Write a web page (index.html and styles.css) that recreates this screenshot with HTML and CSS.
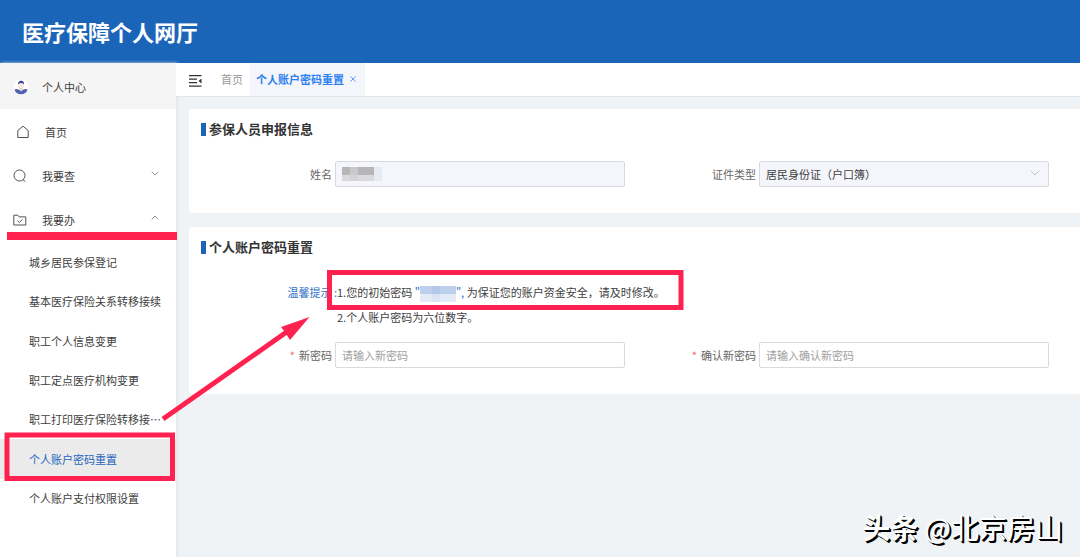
FILE: index.html
```html
<!DOCTYPE html>
<html lang="zh-CN">
<head>
<meta charset="utf-8">
<title>医疗保障个人网厅</title>
<link rel="stylesheet" href="styles.css">
</head>
<body>
<header class="header"><h1 class="brand">医疗保障个人网厅</h1></header>
<div class="layout">
  <nav class="sidebar" aria-label="主菜单">
    <a class="profile" href="#">
      <svg class="avatar" width="16" height="16" viewBox="0 0 16 16" aria-hidden="true">
        <circle cx="8" cy="8" r="7.5" fill="#fff"/>
        <path d="M1.5 10.5Q4 9.2 8 12Q12 9.2 14.5 10.5Q13.2 15.3 8 15.3T1.5 10.5Z" fill="#4e63b0"/>
        <path d="M6.3 8h3.4v2.3L8 12.4 6.3 10.3Z" fill="#f0cfc8"/>
        <circle cx="8" cy="6.2" r="3" fill="#fbe6e0"/>
        <path d="M5 5.6Q4.7 2 8 1.7T11 5.6Q10.5 3.9 8 4T5 5.6Z" fill="#3b4593"/>
      </svg>
      <span>个人中心</span>
    </a>
    <a class="menu-item menu-home" href="#">
      <svg width="14" height="14" viewBox="0 0 14 14" class="icon" aria-hidden="true"><path d="M1.800 12.500V5.500L7 1.200l5.200 4.300v7Z"/></svg>
      <span>首页</span>
    </a>
    <button class="menu-item" type="button" aria-expanded="false">
      <svg width="14" height="14" viewBox="0 0 14 14" class="icon" aria-hidden="true"><circle cx="6.5" cy="6.5" r="5.5"/><path d="M10 10.5l2.3 2.2"/></svg>
      <span>我要查</span>
      <svg width="8" height="5" viewBox="0 0 8 5" class="caret" aria-hidden="true"><path d="M.7.7 4 4 7.3.7"/></svg>
    </button>
    <button class="menu-item" type="button" aria-expanded="true">
      <svg width="14" height="14" viewBox="0 0 14 14" class="icon" aria-hidden="true"><path d="M.8 12V2.2h4l1.4 1.7h6.6V12ZM4.4 7.6l2 1.9 3.1-3"/></svg>
      <span>我要办</span>
      <svg width="8" height="5" viewBox="0 0 8 5" class="caret" aria-hidden="true"><path d="M.7 4.3 4 1l3.3 3.3"/></svg>
    </button>
    <ul class="submenu">
      <li><a href="#">城乡居民参保登记</a></li>
      <li><a href="#">基本医疗保险关系转移接续</a></li>
      <li><a href="#">职工个人信息变更</a></li>
      <li><a href="#">职工定点医疗机构变更</a></li>
      <li><a href="#">职工打印医疗保险转移接⋯</a></li>
      <li><a class="active" href="#" aria-current="page">个人账户密码重置</a></li>
      <li><a href="#">个人账户支付权限设置</a></li>
    </ul>
  </nav>
  <div class="content">
    <div class="tabs">
      <button class="collapse" type="button" aria-label="收起菜单">
        <svg width="13" height="12" viewBox="0 0 13 12" aria-hidden="true"><path d="M0 .7h12.5M0 4.2h8M0 7.7h8M0 11.2h12.5" stroke="#333" stroke-width="1.3"/><path d="M12.5 3.5v4.9L9.5 6Z" fill="#333"/></svg>
      </button>
      <a class="tab" href="#">首页</a>
      <div class="tab tab-active">
        <a href="#">个人账户密码重置</a>
        <button class="close" type="button" aria-label="关闭">
          <svg width="6" height="6" viewBox="0 0 6 6" aria-hidden="true"><path d="M.5.5l5 5m0-5l-5 5"/></svg>
        </button>
      </div>
    </div>
    <main class="main">
      <section class="card card-info">
        <h2 class="card-title">参保人员申报信息</h2>
        <div class="form">
          <div class="field">
            <label for="name">姓名</label>
            <div class="control">
              <input id="name" type="text" disabled>
              <svg class="name-mask" width="40" height="14" viewBox="0 0 40 14" shape-rendering="crispEdges" aria-hidden="true">
                <path fill="#b6b6b8" d="M0 0h8v8H0zM16 0h16v8H16z"/><path fill="#c8c9cb" d="M8 0h8v8H8z"/>
                <path fill="#dadadc" d="M0 8h8v6H0zM16 8h16v6H16z"/><path fill="#d2d3d6" d="M8 8h8v6H8z"/><path fill="#e6eaf1" d="M32 0h8v14h-8z"/>
              </svg>
            </div>
          </div>
          <div class="field">
            <label for="idtype">证件类型</label>
            <div class="control">
              <select id="idtype" disabled><option>居民身份证（户口簿）</option></select>
              <svg class="select-caret" width="10" height="6" viewBox="0 0 10 6" aria-hidden="true"><path d="M.7.7 5 5 9.3.7"/></svg>
            </div>
          </div>
        </div>
      </section>
      <section class="card card-reset">
        <h2 class="card-title">个人账户密码重置</h2>
        <div class="tips">
          <span class="tips-label">温馨提示 :</span>
          <div>
            <p>1.您的初始密码 <span class="quote">"</span><svg class="code-mask" width="36" height="16" viewBox="0 0 36 16" shape-rendering="crispEdges" aria-hidden="true"><path fill="#bdd0eb" d="M0 0h12v8H0zM20 0h16v8H20z"/><path fill="#b4c9e7" d="M12 0h8v8h-8z"/><path fill="#e4ebf6" d="M0 8h36v8H0z"/><path fill="#dae4f3" d="M12 8h8v8h-8z"/></svg><span class="quote">",</span> 为保证您的账户资金安全，请及时修改。</p>
            <p>2.个人账户密码为六位数字。</p>
          </div>
        </div>
        <div class="form">
          <div class="field">
            <label class="required" for="pwd">新密码</label>
            <div class="control"><input id="pwd" type="password" placeholder="请输入新密码"></div>
          </div>
          <div class="field">
            <label class="required" for="pwd2">确认新密码</label>
            <div class="control"><input id="pwd2" type="password" placeholder="请输入确认新密码"></div>
          </div>
        </div>
      </section>
    </main>
  </div>
</div>
<svg class="annotations" width="690" height="500" viewBox="0 0 690 500" aria-hidden="true">
  <path fill="#ff214f" d="M7 232h170v8H7z"/>
  <g fill="none" stroke="#ff214f" stroke-width="5">
    <path d="M7 435h165.500v43.500h-165.500z"/>
    <path d="M329.500 272.500h351.500v35h-351.500z"/>
    <path d="M163 419 288 331"/>
  </g>
  <path fill="#ff214f" d="M309.500 317 281 327l3.500 4.500 5.500 8.500Z"/>
</svg>
<div class="watermark"><b>头条</b> @北京房山</div>
</body>
</html>
```
FILE: styles.css
```css
* { box-sizing: border-box; }

body {
  margin: 0;
  min-height: 100vh;
  display: flex;
  flex-direction: column;
  position: relative;
  background: #eff3f6;
  color: #404040;
  font: 11px/20px "Noto Sans CJK SC", sans-serif;
}

a { color: inherit; text-decoration: none; }
button, input, select { font: inherit; color: inherit; }
button { border: 0; padding: 0; background: none; }
h1, h2, p, ul { margin: 0; padding: 0; }
ul { list-style: none; }

.header {
  height: 63px;
  padding: 0 22px 2px;
  display: flex;
  align-items: center;
  background: #1b65b9;
  color: #fff;
}
.brand { font-size: 22px; line-height: 32px; font-weight: 700; }

.layout { flex: 1; display: flex; }

.sidebar {
  width: 176px;
  flex: none;
  background: #fff;
  box-shadow: 1px 0 3px #dde2e8;
}
.profile {
  display: flex;
  align-items: center;
  gap: 13px;
  height: 46px;
  margin-bottom: 1px;
  padding: 2px 0 0 13px;
  background: #f5f5f5;
}
.menu-item {
  display: flex;
  align-items: center;
  gap: 15px;
  width: 100%;
  height: 44px;
  padding: 0 17px 0 13px;
}
.menu-home { padding-left: 16px; }
.icon { fill: none; stroke: #505050; stroke-width: 1; }
.caret {
  margin: 0 0 6px auto;
  fill: none;
  stroke: #909399;
}

.submenu {
  display: grid;
  grid-auto-rows: 1fr;
  height: 276px;
}
.submenu a {
  display: flex;
  align-items: center;
  height: 100%;
  padding-left: 29px;
  white-space: nowrap;
}
.submenu .active { background: #ebebeb; color: #1f66bd; }

.content { flex: 1; min-width: 0; }
.tabs {
  display: flex;
  height: 34px;
  background: #fff;
  border-bottom: 1px solid #e2e6ea;
}
.collapse { padding: 3px 0 0; margin: 0 13px; display: flex; align-items: center; }
.tab {
  display: flex;
  align-items: center;
  padding: 0 7px 2px 6px;
  color: #999;
}
.tab-active {
  gap: 6px;
  padding-right: 9px;
  background: #f4f6fb;
  color: #2d7ff0;
  font-weight: 700;
}
.close { display: flex; }
.close svg { fill: none; stroke: #5c9bf5; stroke-width: 1; }

.main {
  display: flex;
  flex-direction: column;
  gap: 14px;
  padding: 12px 0 14px 13px;
}
.card {
  padding: 10px 31px 26px 12px;
  background: #fff;
  border-radius: 3px 0 0 3px;
}
.card-title {
  display: flex;
  align-items: center;
  gap: 3px;
  font-size: 13px;
  line-height: 20px;
  color: #333;
}
.card-title::before {
  content: "";
  width: 5px;
  height: 13px;
  background: #1b65b9;
}

.form { display: grid; grid-template-columns: 1fr 1fr; }
.card-info .form { margin-top: 22px; }
.field { display: flex; align-items: center; }
.field label {
  width: 134px;
  padding-right: 3px;
  text-align: right;
  color: #666;
}
.required::before { content: "*"; margin-right: 4px; color: #f56c6c; }
.control { flex: 1; position: relative; }
.control input, .control select {
  display: block;
  width: 100%;
  height: 26px;
  padding: 0 6px;
  border: 1px solid #d8dadf;
  border-radius: 2px;
  background: #fff;
  appearance: none;
}
.control input:disabled, .control select:disabled {
  background: #f4f6fb;
  color: #404040;
  opacity: 1;
}
.control input::placeholder { color: #a0a0a0; opacity: 1; }
.name-mask { position: absolute; left: 7px; top: 6px; }
.select-caret {
  position: absolute;
  right: 9px;
  top: 9px;
  fill: none;
  stroke: #c0c4cc;
}

.tips {
  display: flex;
  margin: 23px 0 12px;
  line-height: 25px;
}
.tips-label {
  width: 136px;
  text-align: right;
  white-space: nowrap;
  color: #2f6fc4;
}
.quote { color: #2f6fc4; }
.code-mask { vertical-align: middle; }

.annotations { position: absolute; left: 0; top: 0; pointer-events: none; }
.watermark {
  position: absolute;
  right: 17px;
  bottom: 10px;
  font-size: 28px;
  line-height: 40px;
  color: #fff;
  text-shadow: 1px 1px 0 #000, 2px 2px 0 #000;
}
.watermark b { font-weight: 700; }
```
